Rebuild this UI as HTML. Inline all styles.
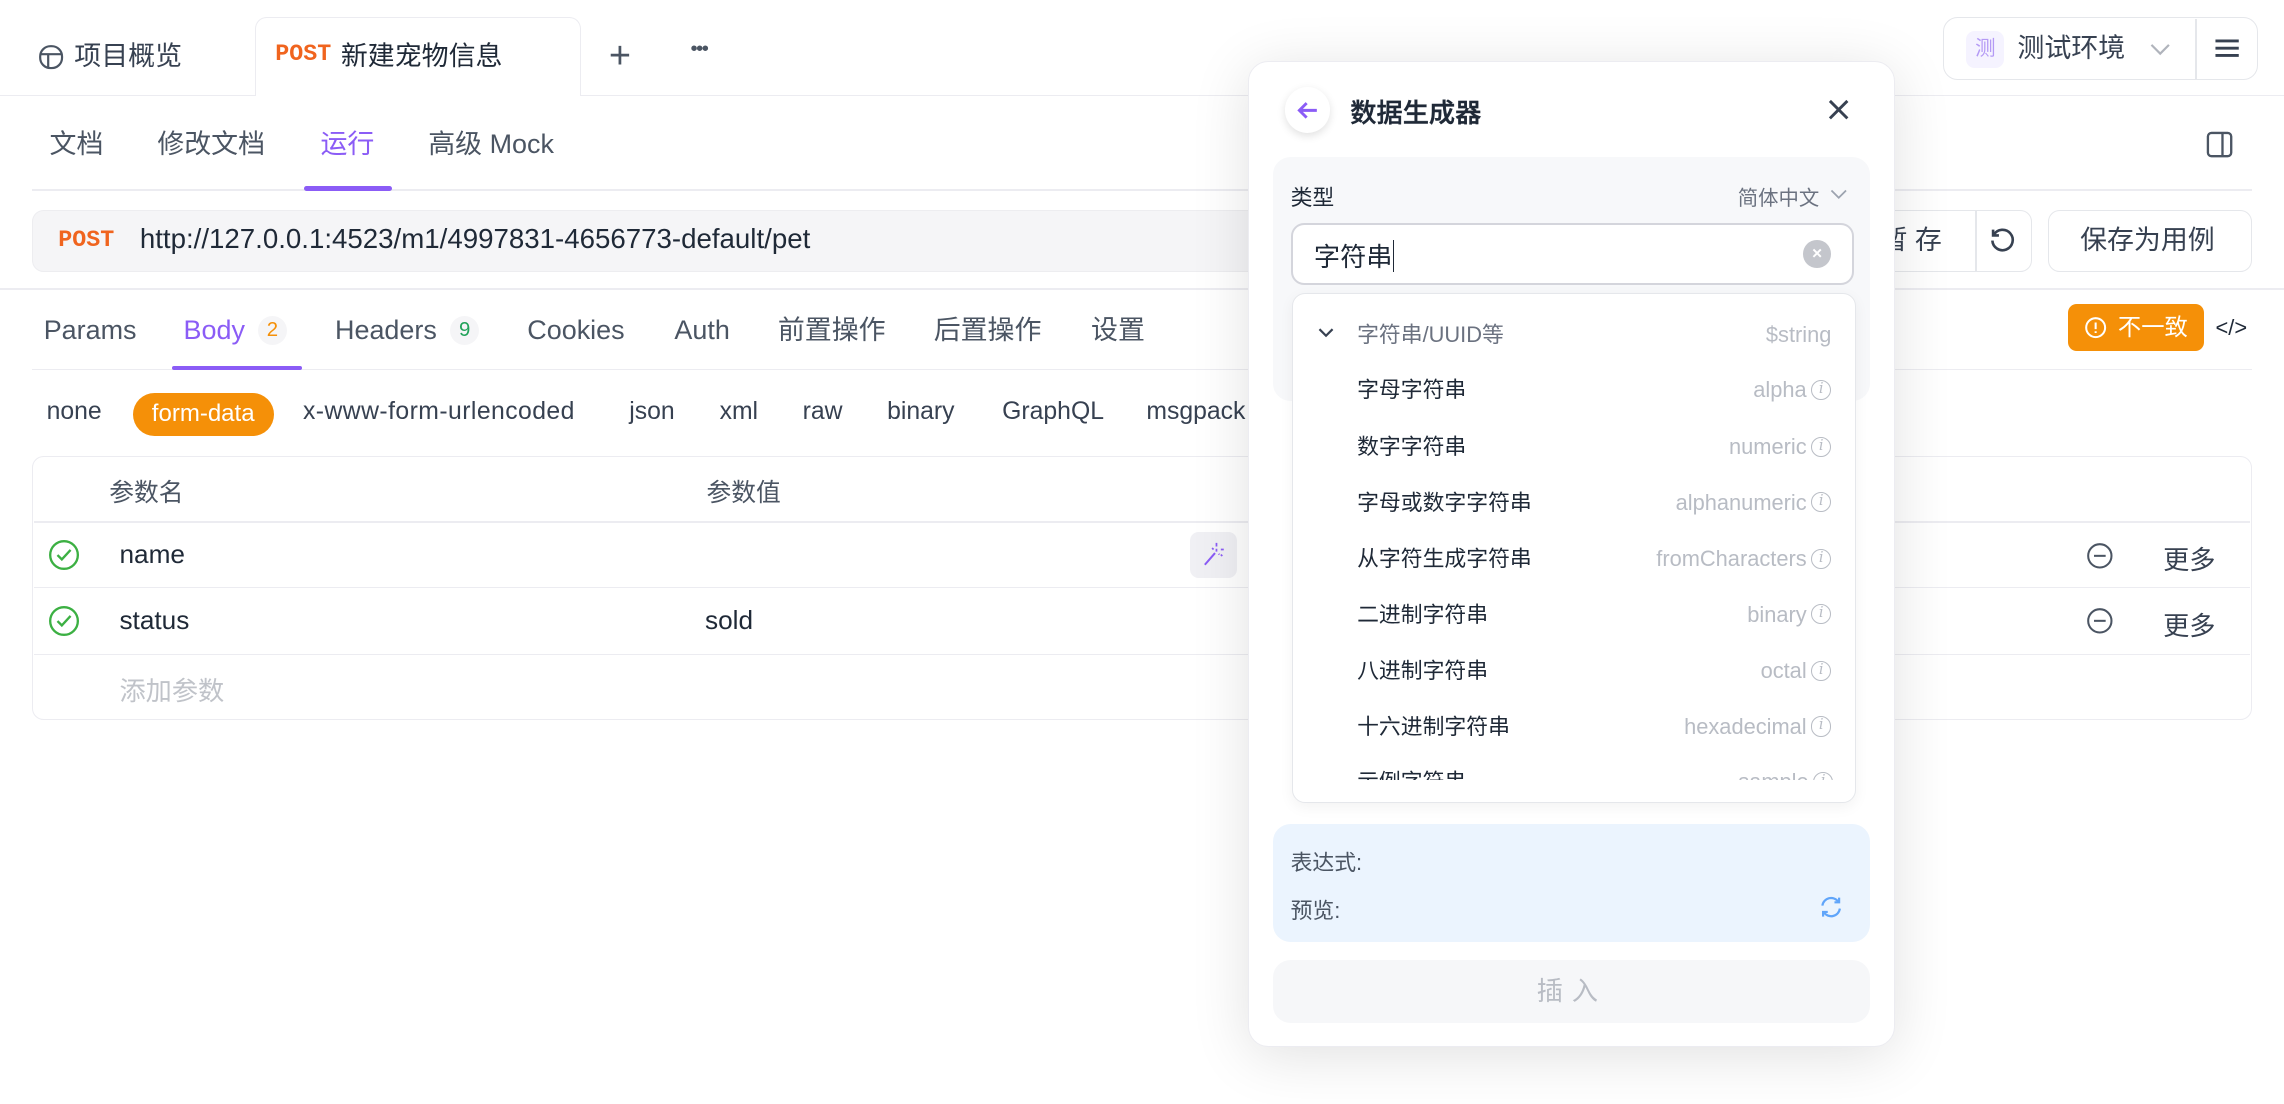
<!DOCTYPE html>
<html><head><meta charset="utf-8"><style>
*{box-sizing:border-box;margin:0;padding:0}
html,body{width:2284px;height:1104px;overflow:hidden;background:#fff}
#r{position:absolute;left:0;top:0;width:1568px;height:758px;zoom:1.45663;font-family:"Liberation Sans","Noto Sans CJK SC",sans-serif;color:#1f2937}
.a{position:absolute;white-space:nowrap}
.t{font-size:18.5px;color:#4b5563;line-height:24px}
.b{font-size:17px;color:#374151;top:273px}
.it{position:absolute;left:44px;font-size:15px;color:#1f2937;line-height:20px}
.iv{position:absolute;right:16px;font-size:15px;color:#b8bcc4;line-height:20px;display:flex;align-items:center;gap:3px}
.ic{display:inline-block;width:14px;height:14px;border:1.3px solid #b8bcc4;border-radius:50%;font-size:10px;line-height:11px;text-align:center;font-style:italic;font-family:"DejaVu Serif",serif;color:#b8bcc4}
</style></head><body><div id="r">
<div class="a" style="left:0;top:65px;width:1568px;height:1px;background:#ececf1"></div>
<div class="a" style="left:175px;top:12px;width:224px;height:54px;background:#fff;border:1px solid #ececf1;border-bottom:none;border-radius:8px 8px 0 0"></div>
<svg class="a" style="left:26px;top:30px" width="18" height="18" viewBox="0 0 18 18" fill="none" stroke="#4b5563" stroke-width="1.5"><rect x="1.5" y="1.5" width="15" height="15" rx="7"/><path d="M1.5 7h15M7 7v9.5"/></svg>
<div class="a t" style="left:51px;top:27px;color:#374151">项目概览</div>
<div class="a" style="left:189px;top:28px;font-size:16px;font-weight:bold;color:#f0641e;font-family:'Liberation Mono',monospace">POST</div>
<div class="a t" style="left:234px;top:27px;color:#1f2937">新建宠物信息</div>
<div class="a" style="left:418px;top:24px;font-size:26px;color:#4b5563;line-height:30px">+</div>
<div class="a" style="left:474px;top:26px;font-size:14px;color:#4b5563;letter-spacing:-1px">•••</div>
<div class="a" style="left:1334px;top:12px;width:216px;height:43px;border:1px solid #e5e7eb;border-radius:10px"></div>
<div class="a" style="left:1507px;top:13px;width:1px;height:41px;background:#e5e7eb"></div>
<div class="a" style="left:1350px;top:21px;width:26px;height:26px;background:#f5f3ff;border-radius:6px;color:#b49af5;font-size:14px;text-align:center;line-height:26px">测</div>
<div class="a t" style="left:1385px;top:21px;color:#374151">测试环境</div>
<svg class="a" style="left:1476px;top:29px" width="14" height="10" viewBox="0 0 14 10"><path d="M1 2l6 6 6-6" fill="none" stroke="#b0b4bc" stroke-width="1.5"/></svg>
<svg class="a" style="left:1520px;top:26px" width="18" height="14"><path d="M1 2h16M1 7h16M1 12h16" stroke="#374151" stroke-width="2"/></svg>
<div class="a t" style="left:34px;top:87px">文档</div>
<div class="a t" style="left:108px;top:87px">修改文档</div>
<div class="a t" style="left:220px;top:87px;color:#8b5cf6">运行</div>
<div class="a t" style="left:294px;top:87px">高级 Mock</div>
<div class="a" style="left:22px;top:130px;width:1524px;height:1px;background:#ececf1"></div>
<div class="a" style="left:209px;top:128px;width:60px;height:3px;background:#8b5cf6;border-radius:2px"></div>
<svg class="a" style="left:1514px;top:89px" width="20" height="20" viewBox="0 0 20 20" fill="none" stroke="#4b5563" stroke-width="1.6"><rect x="2" y="2" width="16" height="16" rx="2.5"/><path d="M12 2v16"/></svg>
<div class="a" style="left:22px;top:144px;width:1300px;height:43px;background:#f5f5f7;border:1px solid #ededf0;border-radius:8px"></div>
<div class="a" style="left:40px;top:156px;font-size:16px;font-weight:bold;color:#f0641e;font-family:'Liberation Mono',monospace">POST</div>
<div class="a" style="left:96px;top:153px;font-size:19px;color:#1f2937">http://127.0.0.1:4523/m1/4997831-4656773-default/pet</div>
<div class="a" style="left:1230px;top:144px;width:165px;height:43px;border:1px solid #e5e7eb;border-radius:8px;background:#fff"></div>
<div class="a" style="left:1356px;top:145px;width:1px;height:41px;background:#e5e7eb"></div>
<div class="a t" style="left:1291px;top:153px;color:#374151">暂 存</div>
<svg class="a" style="left:1365px;top:155px" width="20" height="20" viewBox="0 0 20 20" fill="none" stroke="#374151" stroke-width="1.8"><path d="M4 6A7 7 0 1 1 3 10"/><path d="M3.5 2.5V6.5H7.5"/></svg>
<div class="a" style="left:1406px;top:144px;width:140px;height:43px;border:1px solid #e5e7eb;border-radius:8px"></div>
<div class="a t" style="left:1428px;top:153px;color:#374151">保存为用例</div>
<div class="a" style="left:0;top:198px;width:1568px;height:1px;background:#ececf1"></div>
<div class="a t" style="left:30px;top:215px">Params</div>
<div class="a t" style="left:126px;top:215px;color:#8b5cf6">Body</div>
<div class="a" style="left:177px;top:217px;width:20px;height:20px;border-radius:10px;background:#f5f5f7;color:#f59008;font-size:14px;text-align:center;line-height:20px">2</div>
<div class="a t" style="left:230px;top:215px">Headers</div>
<div class="a" style="left:309px;top:217px;width:20px;height:20px;border-radius:10px;background:#f5f5f7;color:#22a35a;font-size:14px;text-align:center;line-height:20px">9</div>
<div class="a t" style="left:362px;top:215px">Cookies</div>
<div class="a t" style="left:463px;top:215px">Auth</div>
<div class="a t" style="left:534px;top:215px">前置操作</div>
<div class="a t" style="left:641px;top:215px">后置操作</div>
<div class="a t" style="left:749px;top:215px">设置</div>
<div class="a" style="left:22px;top:253px;width:1524px;height:1px;background:#ececf1"></div>
<div class="a" style="left:118px;top:251px;width:89px;height:3px;background:#8b5cf6;border-radius:2px"></div>
<div class="a" style="left:1420px;top:209px;width:93px;height:32px;background:#f59008;border-radius:6px;color:#fff;font-size:16px;line-height:32px;padding-left:34px">不一致</div>
<svg class="a" style="left:1431px;top:217px" width="16" height="16" viewBox="0 0 16 16" fill="none" stroke="#fff" stroke-width="1.4"><circle cx="8" cy="8" r="6.5"/><path d="M8 4.5v4.5M8 10.5v1.2"/></svg>
<div class="a" style="left:1521px;top:216px;font-size:15px;color:#1f2937">&lt;/&gt;</div>
<div class="a b" style="left:32px">none</div>
<div class="a" style="left:91px;top:270px;width:97px;height:29px;background:#f59008;border-radius:15px;color:#fff;font-size:16.5px;line-height:29px;text-align:center">form-data</div>
<div class="a b" style="left:208px;letter-spacing:0.3px">x-www-form-urlencoded</div>
<div class="a b" style="left:432px">json</div>
<div class="a b" style="left:494px">xml</div>
<div class="a b" style="left:551px">raw</div>
<div class="a b" style="left:609px">binary</div>
<div class="a b" style="left:688px">GraphQL</div>
<div class="a b" style="left:787px">msgpack</div>
<div class="a" style="left:22px;top:313px;width:1524px;height:181px;border:1px solid #ececf1;border-radius:8px"></div>
<div class="a" style="left:23px;top:358px;width:1522px;height:1px;background:#ececf1"></div>
<div class="a" style="left:23px;top:403px;width:1522px;height:1px;background:#ececf1"></div>
<div class="a" style="left:23px;top:449px;width:1522px;height:1px;background:#ececf1"></div>
<div class="a" style="left:75px;top:325px;font-size:17px;color:#4b5563">参数名</div>
<div class="a" style="left:485px;top:325px;font-size:17px;color:#4b5563">参数值</div>
<svg class="a" style="left:33px;top:370px" width="22" height="22" viewBox="0 0 22 22" fill="none" stroke="#3cb043" stroke-width="1.6"><circle cx="11" cy="11" r="9.5"/><path d="M6.5 11l3 3 6-6.5"/></svg>
<div class="a" style="left:82px;top:370px;font-size:18px;color:#1f2937">name</div>
<div class="a" style="left:817px;top:365px;width:32px;height:32px;background:#f0f0f4;border-radius:6px"></div>
<svg class="a" style="left:823px;top:371px" width="20" height="20" viewBox="0 0 20 20" fill="none" stroke="#8b5cf6" stroke-width="1.4"><path d="M4 17L11 9"/><path d="M12 2v2.5M12 6v2M15 6.5h2M9 5.5l1 1M15 10l1 1M13.5 9.5l.5 .5" stroke-width="1.2"/></svg>
<svg class="a" style="left:1432px;top:372px" width="19" height="19" viewBox="0 0 19 19" fill="none" stroke="#4b5563" stroke-width="1.4"><circle cx="9.5" cy="9.5" r="8"/><path d="M5.5 9.5h8"/></svg>
<div class="a" style="left:1485px;top:370px;font-size:18px;color:#374151">更多</div>
<svg class="a" style="left:33px;top:415px" width="22" height="22" viewBox="0 0 22 22" fill="none" stroke="#3cb043" stroke-width="1.6"><circle cx="11" cy="11" r="9.5"/><path d="M6.5 11l3 3 6-6.5"/></svg>
<div class="a" style="left:82px;top:415px;font-size:18px;color:#1f2937">status</div>
<div class="a" style="left:484px;top:415px;font-size:18px;color:#1f2937">sold</div>
<svg class="a" style="left:1432px;top:417px" width="19" height="19" viewBox="0 0 19 19" fill="none" stroke="#4b5563" stroke-width="1.4"><circle cx="9.5" cy="9.5" r="8"/><path d="M5.5 9.5h8"/></svg>
<div class="a" style="left:1485px;top:415px;font-size:18px;color:#374151">更多</div>
<div class="a" style="left:82px;top:460px;font-size:18px;color:#c0c3c9">添加参数</div>
<div class="a" style="left:857px;top:42px;width:444px;height:677px;background:#fff;border:1px solid #ececf1;border-radius:14px;box-shadow:0 6px 40px rgba(0,0,0,0.12)"></div>
<div class="a" style="left:882px;top:60px;width:31px;height:31px;border-radius:50%;background:#fff;box-shadow:0 2px 6px rgba(0,0,0,0.12)"></div>
<svg class="a" style="left:889px;top:67px" width="17" height="17" viewBox="0 0 17 17" fill="none" stroke="#8b5cf6" stroke-width="2"><path d="M15 8.5H3M8 3.5l-5 5 5 5"/></svg>
<div class="a" style="left:927px;top:63px;font-size:18px;color:#1f2937;font-weight:500;-webkit-text-stroke:0.3px #1f2937">数据生成器</div>
<svg class="a" style="left:1254px;top:67px" width="16" height="16" viewBox="0 0 16 16" stroke="#374151" stroke-width="2"><path d="M2 2l12 12M14 2L2 14"/></svg>
<div class="a" style="left:874px;top:108px;width:410px;height:167px;background:#f7f8fa;border-radius:12px"></div>
<div class="a" style="left:886px;top:124px;font-size:15px;color:#1f2937">类型</div>
<div class="a" style="left:1193px;top:124px;font-size:14px;color:#6b7280">简体中文</div>
<svg class="a" style="left:1256px;top:130px" width="12" height="8"><path d="M1 1l5 5 5-5" fill="none" stroke="#9ca3af" stroke-width="1.2"/></svg>
<div class="a" style="left:886px;top:153px;width:387px;height:43px;background:#fff;border:1.5px solid #d4d5dc;border-radius:9px"></div>
<div class="a" style="left:902px;top:162px;font-size:18px;color:#1f2937">字符串<span style="display:inline-block;width:1px;height:22px;background:#1f2937;vertical-align:-4px"></span></div>
<div class="a" style="left:1238px;top:165px;width:19px;height:19px;border-radius:50%;background:#c4c6cc;color:#fff;font-size:12px;font-weight:bold;text-align:center;line-height:19px">×</div>
<div class="a" style="left:887px;top:201px;width:387px;height:350px;background:#fff;border:1px solid #e5e7eb;border-radius:9px;box-shadow:0 3px 10px rgba(0,0,0,0.05);overflow:hidden">
<svg class="a" style="left:17px;top:23px" width="11" height="8"><path d="M1 1.5l4.5 4.5 4.5-4.5" fill="none" stroke="#374151" stroke-width="1.5"/></svg>
<div class="it" style="top:18px;color:#6b7280">字符串/UUID等</div><div class="iv" style="top:18px">$string</div>
<div class="it" style="top:56px">字母字符串</div><div class="iv" style="top:56px">alpha<span class="ic">i</span></div>
<div class="it" style="top:95px">数字字符串</div><div class="iv" style="top:95px">numeric<span class="ic">i</span></div>
<div class="it" style="top:133px">字母或数字字符串</div><div class="iv" style="top:133px">alphanumeric<span class="ic">i</span></div>
<div class="it" style="top:172px">从字符生成字符串</div><div class="iv" style="top:172px">fromCharacters<span class="ic">i</span></div>
<div class="it" style="top:210px">二进制字符串</div><div class="iv" style="top:210px">binary<span class="ic">i</span></div>
<div class="it" style="top:249px">八进制字符串</div><div class="iv" style="top:249px">octal<span class="ic">i</span></div>
<div class="it" style="top:287px">十六进制字符串</div><div class="iv" style="top:287px">hexadecimal<span class="ic">i</span></div>
<div class="a" style="left:0;top:0;width:387px;height:334px;overflow:hidden"><div class="it" style="top:325px">示例字符串</div><div class="iv" style="top:325px">sample<span class="ic">i</span></div></div>
</div>
<div class="a" style="left:874px;top:566px;width:410px;height:81px;background:#ebf4fe;border-radius:12px"></div>
<div class="a" style="left:886px;top:581px;font-size:15px;color:#4b5563">表达式:</div>
<div class="a" style="left:886px;top:614px;font-size:15px;color:#4b5563">预览:</div>
<svg class="a" style="left:1248px;top:614px" width="18" height="18" viewBox="0 0 18 18" fill="none" stroke="#60a5fa" stroke-width="1.5"><path d="M3 8a6 6 0 0 1 11-2.5M15 10a6 6 0 0 1-11 2.5"/><path d="M14.5 2.5v3.2h-3.2M3.5 15.5v-3.2h3.2"/></svg>
<div class="a" style="left:874px;top:659px;width:410px;height:43px;background:#f6f7f9;border-radius:12px;color:#b8bcc4;font-size:18px;text-align:center;line-height:43px;letter-spacing:6px">插入</div>
</div></body></html>
